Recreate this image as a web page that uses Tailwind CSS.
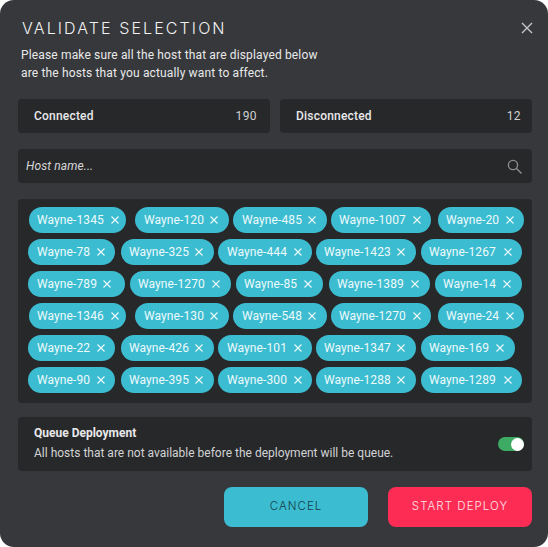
<!DOCTYPE html>
<html lang="en">
  <head>
    <meta charset="UTF-8" />
    <title>Validate selection</title>
    <script src="https://cdn.jsdelivr.net/npm/@tailwindcss/browser@4"></script>
  </head>
  <body class="bg-white">
    <div class="relative flex h-[547px] w-[548px] flex-col overflow-hidden rounded-[14px] bg-[#36383b] pr-[16px] pl-[18px] font-['Roboto',sans-serif] text-[#e9e9ea]">

      <!-- header -->
      <h1 class="mt-[18px] ml-[4px] h-[20px] text-[16px] leading-[20px] font-light tracking-[2.1px] text-[#f2f2f2] font-['Inter',sans-serif]">VALIDATE SELECTION</h1>
      <button class="absolute top-[21px] right-[15px] text-[#c4c5c6]">
        <svg width="12" height="14" viewBox="0 0 12 14" fill="none" stroke="currentColor" stroke-width="1.4"><path d="M1 2l10 10M11 2L1 12" /></svg>
      </button>
      <p class="mt-[8px] ml-[3px] text-[12px] leading-[18px] tracking-[0.15px]">Please make sure all the host that are displayed below<br />are the hosts that you actually want to affect.</p>

      <!-- counts -->
      <div class="mt-[17px] flex gap-[10px]">
        <div class="flex h-[34px] w-[252px] items-center justify-between rounded-[4px] bg-[#27282a] pr-[13px] pl-[16px] text-[12px]">
          <span class="font-medium tracking-[0.2px]">Connected</span><span class="tracking-[0.4px] text-[#cfd0d1]">190</span>
        </div>
        <div class="flex h-[34px] w-[252px] items-center justify-between rounded-[4px] bg-[#27282a] pr-[11px] pl-[16px] text-[12px]">
          <span class="font-medium tracking-[0.2px]">Disconnected</span><span class="tracking-[0.4px] text-[#cfd0d1]">12</span>
        </div>
      </div>

      <!-- search -->
      <div class="mt-[16px] flex h-[34px] items-center justify-between rounded-[4px] bg-[#27282a] pr-[10px] pl-[8px]">
        <span class="text-[12px] tracking-[0.1px] text-[#d8d8d9] italic">Host name...</span>
        <svg width="15" height="15" viewBox="0 0 15 15" fill="none" stroke="#8a8c8e" stroke-width="1.4"><circle cx="6" cy="6" r="4.6" /><path d="M9.5 9.5l5 5" /></svg>
      </div>

      <!-- hosts -->
      <div class="mt-[16px] flex h-[204px] flex-col gap-[6px] rounded-[4px] bg-[#27282a] pt-[8px] text-[12px] tracking-[0.1px] whitespace-nowrap text-[#eefafc]">
        <div class="flex pl-[11px]">
          <span class="flex h-[26px] w-[97px] items-center justify-between rounded-full bg-[#3cbcd0] pr-[7px] pl-[8px]">Wayne-1345<svg width="8" height="8" viewBox="0 0 8 8" fill="none" stroke="currentColor" stroke-width="1.1"><path d="M.5.5l7 7M7.5.5l-7 7" /></svg></span>
          <span class="ml-[9px] flex h-[26px] w-[94px] items-center justify-between rounded-full bg-[#3cbcd0] pr-[11px] pl-[9px]">Wayne-120<svg width="8" height="8" viewBox="0 0 8 8" fill="none" stroke="currentColor" stroke-width="1.1"><path d="M.5.5l7 7M7.5.5l-7 7" /></svg></span>
          <span class="ml-[4px] flex h-[26px] w-[94px] items-center justify-between rounded-full bg-[#3cbcd0] pr-[11px] pl-[9px]">Wayne-485<svg width="8" height="8" viewBox="0 0 8 8" fill="none" stroke="currentColor" stroke-width="1.1"><path d="M.5.5l7 7M7.5.5l-7 7" /></svg></span>
          <span class="ml-[4px] flex h-[26px] w-[100px] items-center justify-between rounded-full bg-[#3cbcd0] pr-[10px] pl-[8px]">Wayne-1007<svg width="8" height="8" viewBox="0 0 8 8" fill="none" stroke="currentColor" stroke-width="1.1"><path d="M.5.5l7 7M7.5.5l-7 7" /></svg></span>
          <span class="ml-[7px] flex h-[26px] w-[86px] items-center justify-between rounded-full bg-[#3cbcd0] pr-[10px] pl-[8px]">Wayne-20<svg width="8" height="8" viewBox="0 0 8 8" fill="none" stroke="currentColor" stroke-width="1.1"><path d="M.5.5l7 7M7.5.5l-7 7" /></svg></span>
        </div>
        <div class="flex pl-[10px]">
          <span class="flex h-[26px] w-[87px] items-center justify-between rounded-full bg-[#3cbcd0] pr-[10px] pl-[9px]">Wayne-78<svg width="8" height="8" viewBox="0 0 8 8" fill="none" stroke="currentColor" stroke-width="1.1"><path d="M.5.5l7 7M7.5.5l-7 7" /></svg></span>
          <span class="ml-[6px] flex h-[26px] w-[93px] items-center justify-between rounded-full bg-[#3cbcd0] pr-[11px] pl-[8px]">Wayne-325<svg width="8" height="8" viewBox="0 0 8 8" fill="none" stroke="currentColor" stroke-width="1.1"><path d="M.5.5l7 7M7.5.5l-7 7" /></svg></span>
          <span class="ml-[4px] flex h-[26px] w-[94px] items-center justify-between rounded-full bg-[#3cbcd0] pr-[10px] pl-[9px]">Wayne-444<svg width="8" height="8" viewBox="0 0 8 8" fill="none" stroke="currentColor" stroke-width="1.1"><path d="M.5.5l7 7M7.5.5l-7 7" /></svg></span>
          <span class="ml-[4px] flex h-[26px] w-[100px] items-center justify-between rounded-full bg-[#3cbcd0] pr-[11px] pl-[8px]">Wayne-1423<svg width="8" height="8" viewBox="0 0 8 8" fill="none" stroke="currentColor" stroke-width="1.1"><path d="M.5.5l7 7M7.5.5l-7 7" /></svg></span>
          <span class="ml-[5px] flex h-[26px] w-[101px] items-center justify-between rounded-full bg-[#3cbcd0] pr-[10px] pl-[8px]">Wayne-1267<svg width="8" height="8" viewBox="0 0 8 8" fill="none" stroke="currentColor" stroke-width="1.1"><path d="M.5.5l7 7M7.5.5l-7 7" /></svg></span>
        </div>
        <div class="flex pl-[10px]">
          <span class="flex h-[26px] w-[97px] items-center justify-between rounded-full bg-[#3cbcd0] pr-[14px] pl-[9px]">Wayne-789<svg width="8" height="8" viewBox="0 0 8 8" fill="none" stroke="currentColor" stroke-width="1.1"><path d="M.5.5l7 7M7.5.5l-7 7" /></svg></span>
          <span class="ml-[5px] flex h-[26px] w-[101px] items-center justify-between rounded-full bg-[#3cbcd0] pr-[11px] pl-[8px]">Wayne-1270<svg width="8" height="8" viewBox="0 0 8 8" fill="none" stroke="currentColor" stroke-width="1.1"><path d="M.5.5l7 7M7.5.5l-7 7" /></svg></span>
          <span class="ml-[5px] flex h-[26px] w-[87px] items-center justify-between rounded-full bg-[#3cbcd0] pr-[11px] pl-[8px]">Wayne-85<svg width="8" height="8" viewBox="0 0 8 8" fill="none" stroke="currentColor" stroke-width="1.1"><path d="M.5.5l7 7M7.5.5l-7 7" /></svg></span>
          <span class="ml-[6px] flex h-[26px] w-[101px] items-center justify-between rounded-full bg-[#3cbcd0] pr-[11px] pl-[8px]">Wayne-1389<svg width="8" height="8" viewBox="0 0 8 8" fill="none" stroke="currentColor" stroke-width="1.1"><path d="M.5.5l7 7M7.5.5l-7 7" /></svg></span>
          <span class="ml-[5px] flex h-[26px] w-[87px] items-center justify-between rounded-full bg-[#3cbcd0] pr-[11px] pl-[8px]">Wayne-14<svg width="8" height="8" viewBox="0 0 8 8" fill="none" stroke="currentColor" stroke-width="1.1"><path d="M.5.5l7 7M7.5.5l-7 7" /></svg></span>
        </div>
        <div class="flex pl-[11px]">
          <span class="flex h-[26px] w-[97px] items-center justify-between rounded-full bg-[#3cbcd0] pr-[7px] pl-[8px]">Wayne-1346<svg width="8" height="8" viewBox="0 0 8 8" fill="none" stroke="currentColor" stroke-width="1.1"><path d="M.5.5l7 7M7.5.5l-7 7" /></svg></span>
          <span class="ml-[9px] flex h-[26px] w-[94px] items-center justify-between rounded-full bg-[#3cbcd0] pr-[11px] pl-[9px]">Wayne-130<svg width="8" height="8" viewBox="0 0 8 8" fill="none" stroke="currentColor" stroke-width="1.1"><path d="M.5.5l7 7M7.5.5l-7 7" /></svg></span>
          <span class="ml-[4px] flex h-[26px] w-[94px] items-center justify-between rounded-full bg-[#3cbcd0] pr-[11px] pl-[9px]">Wayne-548<svg width="8" height="8" viewBox="0 0 8 8" fill="none" stroke="currentColor" stroke-width="1.1"><path d="M.5.5l7 7M7.5.5l-7 7" /></svg></span>
          <span class="ml-[4px] flex h-[26px] w-[100px] items-center justify-between rounded-full bg-[#3cbcd0] pr-[10px] pl-[8px]">Wayne-1270<svg width="8" height="8" viewBox="0 0 8 8" fill="none" stroke="currentColor" stroke-width="1.1"><path d="M.5.5l7 7M7.5.5l-7 7" /></svg></span>
          <span class="ml-[7px] flex h-[26px] w-[86px] items-center justify-between rounded-full bg-[#3cbcd0] pr-[10px] pl-[8px]">Wayne-24<svg width="8" height="8" viewBox="0 0 8 8" fill="none" stroke="currentColor" stroke-width="1.1"><path d="M.5.5l7 7M7.5.5l-7 7" /></svg></span>
        </div>
        <div class="flex pl-[10px]">
          <span class="flex h-[26px] w-[87px] items-center justify-between rounded-full bg-[#3cbcd0] pr-[10px] pl-[9px]">Wayne-22<svg width="8" height="8" viewBox="0 0 8 8" fill="none" stroke="currentColor" stroke-width="1.1"><path d="M.5.5l7 7M7.5.5l-7 7" /></svg></span>
          <span class="ml-[6px] flex h-[26px] w-[93px] items-center justify-between rounded-full bg-[#3cbcd0] pr-[11px] pl-[8px]">Wayne-426<svg width="8" height="8" viewBox="0 0 8 8" fill="none" stroke="currentColor" stroke-width="1.1"><path d="M.5.5l7 7M7.5.5l-7 7" /></svg></span>
          <span class="ml-[4px] flex h-[26px] w-[94px] items-center justify-between rounded-full bg-[#3cbcd0] pr-[10px] pl-[9px]">Wayne-101<svg width="8" height="8" viewBox="0 0 8 8" fill="none" stroke="currentColor" stroke-width="1.1"><path d="M.5.5l7 7M7.5.5l-7 7" /></svg></span>
          <span class="ml-[4px] flex h-[26px] w-[100px] items-center justify-between rounded-full bg-[#3cbcd0] pr-[11px] pl-[8px]">Wayne-1347<svg width="8" height="8" viewBox="0 0 8 8" fill="none" stroke="currentColor" stroke-width="1.1"><path d="M.5.5l7 7M7.5.5l-7 7" /></svg></span>
          <span class="ml-[5px] flex h-[26px] w-[94px] items-center justify-between rounded-full bg-[#3cbcd0] pr-[11px] pl-[8px]">Wayne-169<svg width="8" height="8" viewBox="0 0 8 8" fill="none" stroke="currentColor" stroke-width="1.1"><path d="M.5.5l7 7M7.5.5l-7 7" /></svg></span>
        </div>
        <div class="flex pl-[10px]">
          <span class="flex h-[26px] w-[87px] items-center justify-between rounded-full bg-[#3cbcd0] pr-[10px] pl-[9px]">Wayne-90<svg width="8" height="8" viewBox="0 0 8 8" fill="none" stroke="currentColor" stroke-width="1.1"><path d="M.5.5l7 7M7.5.5l-7 7" /></svg></span>
          <span class="ml-[6px] flex h-[26px] w-[93px] items-center justify-between rounded-full bg-[#3cbcd0] pr-[11px] pl-[8px]">Wayne-395<svg width="8" height="8" viewBox="0 0 8 8" fill="none" stroke="currentColor" stroke-width="1.1"><path d="M.5.5l7 7M7.5.5l-7 7" /></svg></span>
          <span class="ml-[4px] flex h-[26px] w-[94px] items-center justify-between rounded-full bg-[#3cbcd0] pr-[10px] pl-[9px]">Wayne-300<svg width="8" height="8" viewBox="0 0 8 8" fill="none" stroke="currentColor" stroke-width="1.1"><path d="M.5.5l7 7M7.5.5l-7 7" /></svg></span>
          <span class="ml-[4px] flex h-[26px] w-[100px] items-center justify-between rounded-full bg-[#3cbcd0] pr-[11px] pl-[8px]">Wayne-1288<svg width="8" height="8" viewBox="0 0 8 8" fill="none" stroke="currentColor" stroke-width="1.1"><path d="M.5.5l7 7M7.5.5l-7 7" /></svg></span>
          <span class="ml-[5px] flex h-[26px] w-[101px] items-center justify-between rounded-full bg-[#3cbcd0] pr-[10px] pl-[8px]">Wayne-1289<svg width="8" height="8" viewBox="0 0 8 8" fill="none" stroke="currentColor" stroke-width="1.1"><path d="M.5.5l7 7M7.5.5l-7 7" /></svg></span>
        </div>
      </div>

      <!-- queue option -->
      <div class="mt-[14px] flex h-[54px] items-center justify-between rounded-[4px] bg-[#27282a] pr-[8px] pl-[16px]">
        <div class="text-[12px] leading-[19px]">
          <div class="-mt-[1px] mb-[1px] font-bold">Queue Deployment</div>
          <div class="text-[#d2d3d4]">All hosts that are not available before the deployment will be queue.</div>
        </div>
        <div class="relative h-[14px] w-[26px] rounded-full bg-[#3dab63]">
          <div class="absolute top-[0.5px] right-0 size-[13px] rounded-full bg-white"></div>
        </div>
      </div>

      <!-- actions -->
      <div class="mt-[16px] flex justify-end gap-[20px] text-[11.5px] tracking-[1.05px] font-light font-['Inter',sans-serif]">
        <button class="h-[40px] w-[144px] rounded-[8px] bg-[#3cbcd0] text-[#143e4a]">CANCEL</button>
        <button class="h-[40px] w-[144px] rounded-[8px] bg-[#fc2c55] text-[#fde3e8]">START DEPLOY</button>
      </div>
    </div>
  </body>
</html>
